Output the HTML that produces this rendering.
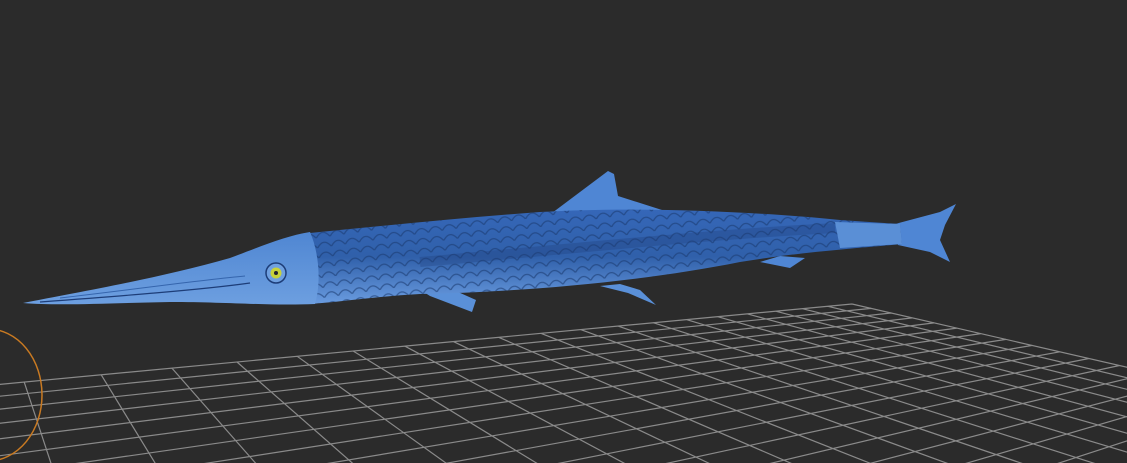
<!DOCTYPE html>
<html><head><style>
html,body{margin:0;padding:0;background:#2b2b2b;width:1127px;height:463px;overflow:hidden}
svg{display:block}
</style></head><body>
<svg id="s" width="1127" height="463" viewBox="0 0 1127 463">
<defs>
<linearGradient id="body" x1="0" y1="0" x2="0" y2="1">
<stop offset="0" stop-color="#3567b8"/><stop offset="0.5" stop-color="#3060aa"/><stop offset="1" stop-color="#6a9ce0"/>
</linearGradient>
<linearGradient id="head" x1="0" y1="0" x2="0" y2="1">
<stop offset="0" stop-color="#4f86d2"/><stop offset="1" stop-color="#6d9fe0"/>
</linearGradient>
<pattern id="scales" width="14" height="10" patternUnits="userSpaceOnUse" patternTransform="rotate(-8)">
<path d="M0 10 Q7 0 14 10" fill="none" stroke="#1b3a70" stroke-width="1.3" opacity="0.6"/>
</pattern>
</defs>
<g id="grid" stroke="#8a8a8a" stroke-width="1.2" fill="none"></g>
<ellipse cx="-12" cy="395" rx="54" ry="66" fill="none" stroke="#c97a22" stroke-width="1.5"/>
<path d="M552 213 L608 171 L614 174 L618 196 L662 210 L600 215 Z" fill="#4f86d4"/>
<path d="M408 282 L430 296 L472 312 L476 300 L458 292 Z" fill="#5a90d8"/>
<path d="M600 286 L628 293 L656 305 L640 290 L620 284 Z" fill="#5a90d8"/>
<path d="M760 262 L790 268 L805 258 L780 256 Z" fill="#4f86d4"/>
<path d="M895 224 L940 212 L956 204 L945 225 L940 240 L950 262 L930 252 L898 245 Z" fill="#4f86d4"/>
<path d="M300 234 C380 226 460 218 540 212 C640 206 760 212 840 220 L900 224 L902 244 C860 248 800 252 740 262 C640 282 520 292 420 294 C380 296 340 302 310 304 Z" fill="url(#body)"/>
<path d="M300 234 C380 226 460 218 540 212 C640 206 760 212 840 220 L900 224 L902 244 C860 248 800 252 740 262 C640 282 520 292 420 294 C380 296 340 302 310 304 Z" fill="url(#scales)"/>
<path d="M420 262 C560 250 700 235 835 228" stroke="#1d3d78" stroke-width="10" opacity="0.3" fill="none"/>
<path d="M835 222 L900 224 L902 244 L840 248 Z" fill="#5a8fd6"/>
<path d="M23 303 C80 292 160 278 230 258 C262 246 285 236 310 232 C318 250 322 280 315 304 C270 306 230 302 170 302 C110 303 60 306 23 303 Z" fill="url(#head)"/>
<path d="M40 302 C120 296 200 290 250 283" stroke="#1d3d78" stroke-width="1.2" fill="none"/>
<path d="M60 298 C130 290 200 280 245 276" stroke="#3565ad" stroke-width="1" fill="none"/>
<circle cx="276" cy="273" r="10" fill="#6fa0e0" stroke="#1d3d78" stroke-width="1.5"/>
<circle cx="276" cy="273" r="5.5" fill="#c8d23a"/>
<circle cx="276" cy="273" r="2" fill="#223"/>
</svg>
<script>
(function(){
function H(p){
 var x0=p[0],y0=p[1],x1=p[2],y1=p[3],x2=p[4],y2=p[5],x3=p[6],y3=p[7];
 var dx1=x1-x2,dx2=x3-x2,dy1=y1-y2,dy2=y3-y2,sx=x0-x1+x2-x3,sy=y0-y1+y2-y3;
 var den=dx1*dy2-dx2*dy1;
 var g=(sx*dy2-dx2*sy)/den,h=(dx1*sy-sx*dy1)/den;
 var a=x1-x0+g*x1,b=x3-x0+h*x3,c=x0,d=y1-y0+g*y1,e=y3-y0+h*y3,f=y0;
 return function(u,v){var w=g*u+h*v+1;return[(a*u+b*v+c)/w,(d*u+e*v+f)/w];};
}
var m=H([852,304, -60,390, -40,900, 1300,407]);
var N=20,M=16,g=document.getElementById('grid'),s='';
for(var i=0;i<=N;i++){var a=m(i/N,0),b=m(i/N,1);s+='M'+a[0].toFixed(1)+' '+a[1].toFixed(1)+'L'+b[0].toFixed(1)+' '+b[1].toFixed(1);}
for(var j=0;j<=M;j++){var a=m(0,j/M),b=m(1,j/M);s+='M'+a[0].toFixed(1)+' '+a[1].toFixed(1)+'L'+b[0].toFixed(1)+' '+b[1].toFixed(1);}
var p=document.createElementNS('http://www.w3.org/2000/svg','path');p.setAttribute('d',s);g.appendChild(p);
})();
</script>
</body></html>
